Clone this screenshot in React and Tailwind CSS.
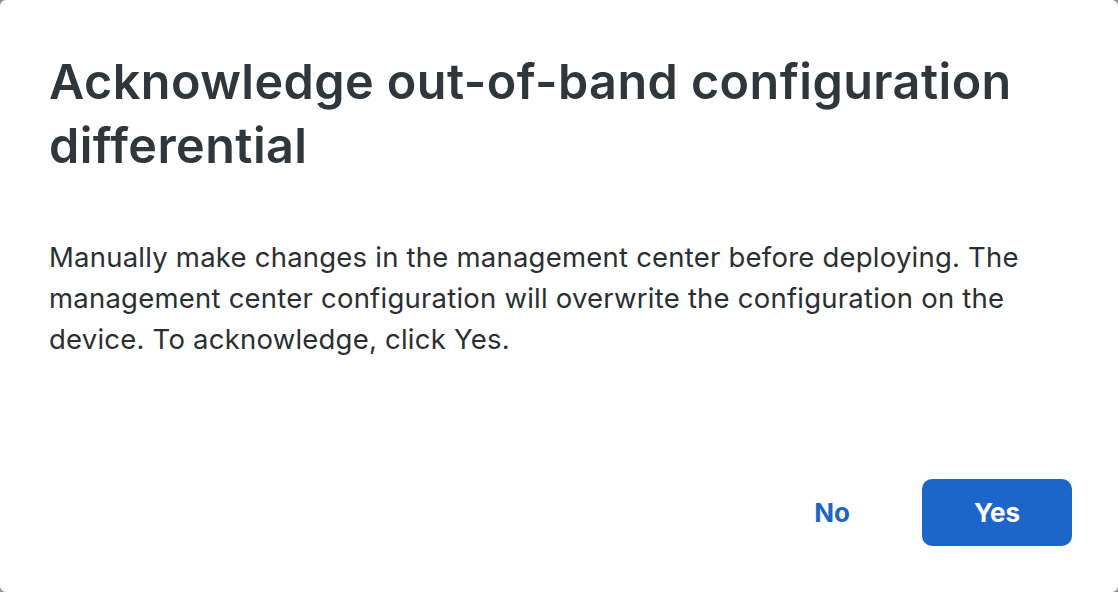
export default function App() {
  return (
    <div className="w-[1118px] h-[592px] bg-[#8a8d91]">
      <div className="w-full h-full bg-white rounded-[6px] flex flex-col pl-[49px] pr-[46px] pt-[50px] pb-[46px]" style={{ fontFamily: 'Inter, "Noto Sans", sans-serif' }}>
        <h1 className="text-[48.5px] leading-[64px] font-semibold text-[#31363b] tracking-[0.45px] w-[1010px]">
          Acknowledge out-of-band configuration differential
        </h1>
        <p className="mt-[59px] text-[27.5px] leading-[41px] text-[#2b2f33] tracking-[0.22px] w-[1000px]">
          Manually make changes in the management center before deploying. The management center configuration will overwrite the configuration on the device. To acknowledge, click Yes.
        </p>
        <div className="mt-auto flex justify-end items-center gap-[36px]">
          <button className="text-[#1d66c9] text-[26px] font-bold px-[36px] h-[67px]">No</button>
          <button className="bg-[#1d66c9] text-white text-[26px] font-bold w-[150px] h-[67px] rounded-[10px]">Yes</button>
        </div>
      </div>
    </div>
  );
}
